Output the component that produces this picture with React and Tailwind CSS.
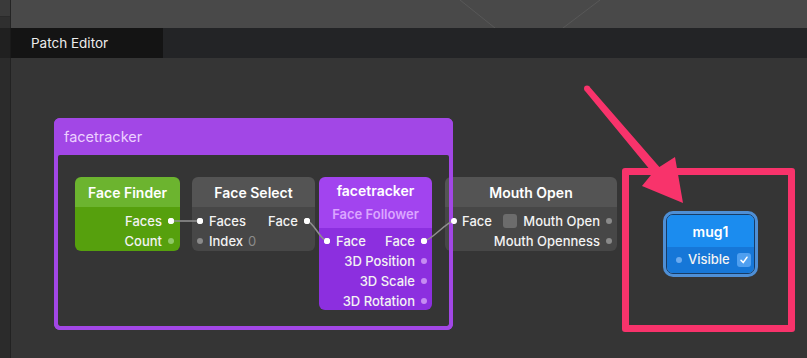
import React from "react";

const FONT = { fontFamily: "Inter, 'Noto Sans', sans-serif" };

function Dot({ on, dim }) {
  return (
    <span
      className={
        "inline-block w-[6px] h-[6px] rounded-full shrink-0 " +
        (on ? "bg-white" : dim)
      }
    />
  );
}

function Row({ children, className = "" }) {
  return (
    <div
      className={
        "flex items-center h-[20px] px-[5px] gap-[6px] text-[13px] font-medium text-[#f3f3f3] leading-none whitespace-nowrap " +
        className
      }
    >
      {children}
    </div>
  );
}

function FaceFinder() {
  const dim = "bg-[#8fc866]";
  return (
    <div className="absolute left-[75px] top-[119px] w-[105px] rounded-[6px] overflow-hidden">
      <div className="h-[30px] bg-[#6cb42f] flex items-center justify-center text-[14px] font-semibold text-white">
        Face Finder
      </div>
      <div className="bg-[#56a00d] pt-[4px] h-[44px]">
        <Row className="justify-end pr-[6px]">
          <span>Faces</span>
          <Dot on />
        </Row>
        <Row className="justify-end pr-[6px]">
          <span>Count</span>
          <Dot dim={dim} />
        </Row>
      </div>
    </div>
  );
}

function FaceSelect() {
  const dim = "bg-[#8a8a8a]";
  return (
    <div className="absolute left-[192px] top-[119px] w-[123px] rounded-[6px] overflow-hidden">
      <div className="h-[30px] bg-[#545454] flex items-center justify-center text-[14px] font-semibold text-white">
        Face Select
      </div>
      <div className="bg-[#474747] pt-[4px] h-[44px]">
        <Row>
          <Dot on />
          <span>Faces</span>
          <span className="ml-auto">Face</span>
          <Dot on />
        </Row>
        <Row>
          <Dot dim={dim} />
          <span>Index</span>
          <span className="font-normal text-[#8c8c8c] -ml-[1px]">0</span>
        </Row>
      </div>
    </div>
  );
}

function FaceFollower() {
  const dim = "bg-[#c58cf2]";
  return (
    <div className="absolute left-[319px] top-[119px] w-[113px] rounded-[6px] overflow-hidden">
      <div className="h-[51px] bg-[#a244ef] flex flex-col items-center pt-[5px]">
        <span className="leading-[18px] text-[14px] font-semibold text-white">
          facetracker
        </span>
        <span className="mt-[5px] leading-[18px] text-[13px] font-semibold text-[#dba6ff]">
          Face Follower
        </span>
      </div>
      <div className="bg-[#8c2fdf] pt-[3px] h-[82px]">
        <Row className="h-[19px]">
          <Dot on />
          <span>Face</span>
          <span className="ml-auto">Face</span>
          <Dot on />
        </Row>
        <Row className="h-[19px] justify-end">
          <span>3D Position</span>
          <Dot dim={dim} />
        </Row>
        <Row className="h-[19px] justify-end">
          <span>3D Scale</span>
          <Dot dim={dim} />
        </Row>
        <Row className="h-[20px] justify-end">
          <span>3D Rotation</span>
          <Dot dim={dim} />
        </Row>
      </div>
    </div>
  );
}

function MouthOpen() {
  const dim = "bg-[#8a8a8a]";
  return (
    <div className="absolute left-[445px] top-[119px] w-[172px] rounded-[6px] overflow-hidden">
      <div className="h-[30px] bg-[#545454] flex items-center justify-center text-[14px] font-semibold text-white">
        Mouth Open
      </div>
      <div className="bg-[#474747] pt-[4px] h-[44px]">
        <Row>
          <Dot on />
          <span>Face</span>
          <span className="ml-auto w-[14px] h-[14px] shrink-0 rounded-[3px] bg-[#6c6c6c]" />
          <span>Mouth Open</span>
          <Dot dim={dim} />
        </Row>
        <Row className="justify-end">
          <span>Mouth Openness</span>
          <Dot dim={dim} />
        </Row>
      </div>
    </div>
  );
}

function Mug() {
  return (
    <div className="absolute left-[663px] top-[153px] w-[95px] h-[66px] rounded-[10px] bg-[#4e8fd6] p-[3px]">
      <div className="h-full rounded-[7px] border border-[#173c66] overflow-hidden flex flex-col">
        <div className="h-[32px] bg-[#1b8cef] flex items-center justify-center text-[14px] font-semibold text-white">
          mug1
        </div>
        <div className="flex-1 bg-[#1677d8] flex items-center pl-[9px] gap-[6px] text-[13px] font-medium text-[#f3f3f3]">
          <Dot dim="bg-[#6aaaf0]" />
          <span>Visible</span>
          <span className="ml-[1px] w-[14px] h-[14px] rounded-[3px] bg-[#4f9ff0] flex items-center justify-center">
            <svg width="10" height="10" viewBox="0 0 10 10">
              <path
                d="M2 5.3 L4.2 7.6 L8 2.2"
                fill="none"
                stroke="white"
                strokeWidth="1.5"
                strokeLinecap="round"
                strokeLinejoin="round"
              />
            </svg>
          </span>
        </div>
      </div>
    </div>
  );
}

export default function App() {
  return (
    <div
      className="w-[807px] h-[358px] flex flex-col overflow-hidden bg-[#353535]"
      style={FONT}
    >
      <div className="flex h-[28px] shrink-0">
        <div className="w-[11px] bg-[#2f2f2f] border-r border-[#242424] flex flex-col">
          <div className="h-[17px] bg-[#3a3a3a] border-b border-[#2a2a2a]" />
        </div>
        <div className="flex-1 relative bg-[#494949]">
          <svg className="absolute inset-0" width="796" height="28">
            <g transform="translate(-11,0)" stroke="#585858" strokeWidth="1">
              <line x1="460" y1="0" x2="495" y2="28" />
              <line x1="600" y1="0" x2="563" y2="28" />
            </g>
          </svg>
        </div>
      </div>

      <div className="flex h-[30px] shrink-0 bg-[#232426]">
        <div className="w-[11px] bg-[#202020] border-r border-[#1a1a1a]" />
        <div className="w-[152px] bg-[#141414] flex items-center pl-[20px] text-[13.5px] text-[#ececec]">
          Patch Editor
        </div>
      </div>

      <div className="flex-1 relative flex">
        <div className="w-[11px] bg-[#2b2b2b] border-r border-[#222222]" />
        <div className="flex-1 bg-[#353535]" />

        <div className="absolute inset-0">
          {/* group */}
          <div className="absolute left-[54px] top-[60px] w-[399px] h-[212px] rounded-[6px] bg-[#a247e6] flex flex-col px-[4px] pb-[4px]">
            <div className="h-[37px] shrink-0 flex items-center pl-[6px] text-[14.5px] text-[#ecd0ff]">
              facetracker
            </div>
            <div className="flex-1 rounded-[2px] bg-[#353535]" />
          </div>

          <FaceFinder />
          <FaceSelect />
          <FaceFollower />
          <MouthOpen />

          {/* group frame on top */}
          <div className="absolute left-[54px] top-[60px] w-[399px] h-[212px] rounded-[6px] border-[4px] border-[#a247e6]" />

          <svg className="absolute inset-0" width="807" height="300">
            <g transform="translate(0,-58)">
              <g fill="none" stroke="#8e8e8e" strokeWidth="1.6">
                <path d="M171 221 L200 221" />
                <path d="M307 221 C313 221 321 241 327 241" />
                <path d="M424 241 C431 241 447 221 454 221" />
              </g>
              <g fill="white">
                <circle cx="171" cy="221" r="3" />
                <circle cx="200" cy="221" r="3" />
                <circle cx="307" cy="221" r="3" />
                <circle cx="327" cy="241" r="3" />
                <circle cx="424" cy="241" r="3" />
                <circle cx="454" cy="221" r="3" />
              </g>
            </g>
          </svg>

          <Mug />

          <div className="absolute left-[622px] top-[110px] w-[173px] h-[164px] rounded-[3px] border-[7px] border-[#f8336b]" />

          <svg className="absolute inset-0" width="807" height="300">
            <g transform="translate(0,-58)" fill="#f8336b">
              <circle cx="587" cy="88.5" r="3" />
              <polygon points="589.3,86.6 659.4,167.1 675,157 683,203 642,186 652.6,172.9 584.7,90.4" />
            </g>
          </svg>
        </div>
      </div>
    </div>
  );
}
